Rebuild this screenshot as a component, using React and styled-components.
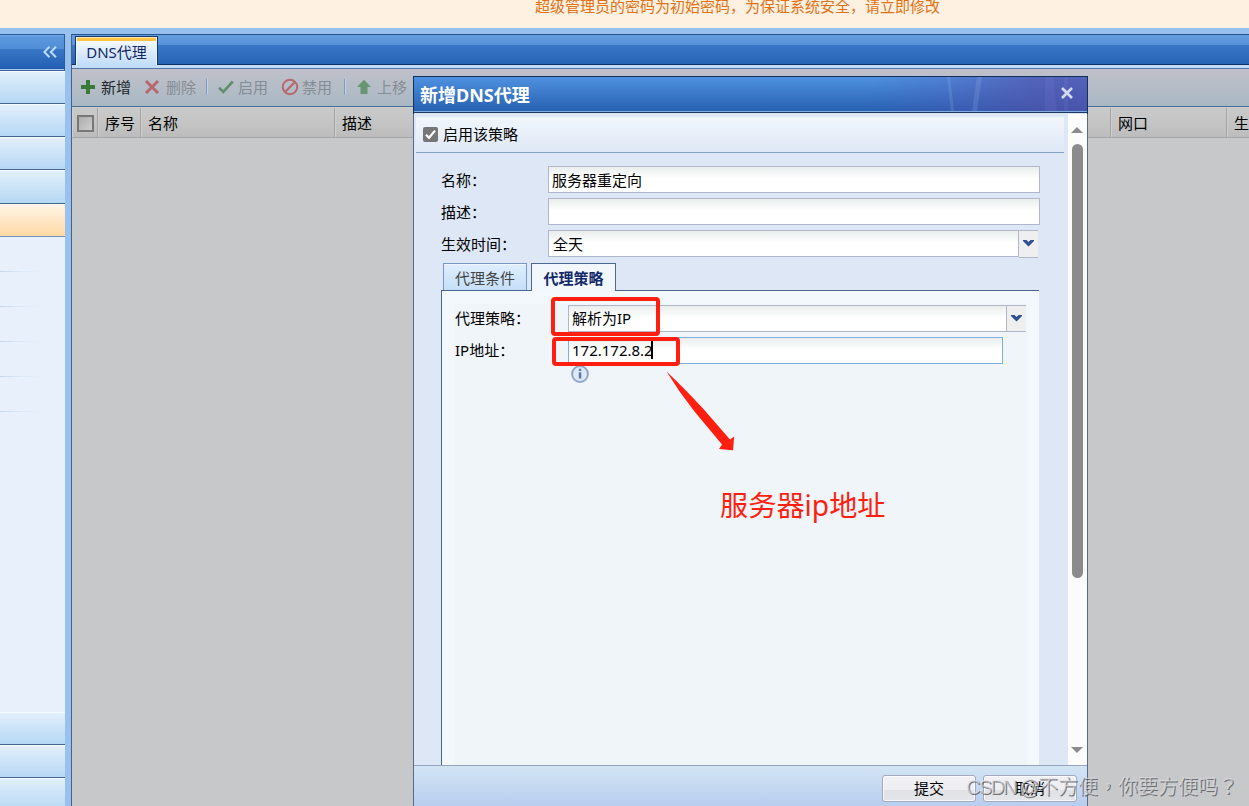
import React, { useState } from 'react';
import styled, { createGlobalStyle, css } from 'styled-components';

const GlobalStyle = createGlobalStyle`
  * {
    box-sizing: border-box;
  }

  body {
    margin: 0;
    overflow: hidden;
    background: #98c1ee;
    color: #000;
    font-family: "Noto Sans", "Noto Sans CJK SC", sans-serif;
    font-size: 15px;
    line-height: 20px;
  }

  input {
    font: inherit;
  }
`;

const PlusIcon = () => (
  <svg width="16" height="16" viewBox="0 0 16 16">
    <path d="M6 1h4v5h5v4h-5v5H6v-5H1V6h5z" fill="#3a7a38" />
  </svg>
);

const DeleteIcon = () => (
  <svg width="16" height="16" viewBox="0 0 16 16">
    <path d="M2 2l12 12M14 2L2 14" stroke="#b5686d" strokeWidth="3" fill="none" />
  </svg>
);

const CheckIcon = () => (
  <svg width="16" height="16" viewBox="0 0 16 16">
    <path d="M1 8.8l4.3 4L14.8 2.5" stroke="#628f6c" strokeWidth="2.6" fill="none" />
  </svg>
);

const BanIcon = () => (
  <svg width="18" height="18" viewBox="0 0 18 18">
    <circle cx="9" cy="9" r="7.2" stroke="#b7676d" strokeWidth="2" fill="none" />
    <path d="M4.5 13.5l9-9" stroke="#b7676d" strokeWidth="2.2" />
  </svg>
);

const UpIcon = () => (
  <svg width="16" height="16" viewBox="0 0 16 16">
    <path d="M8 .8L15 8h-3.5v7h-7V8H1z" fill="#679672" />
  </svg>
);

const ArrowDown = () => (
  <svg width="12" height="8" viewBox="0 0 12 8">
    <path d="M0 1h3.5l2 2 2-2H11v1L5.500 7.500 0 2z" fill="#2f5191" />
  </svg>
);

const CollapseIcon = () => (
  <svg width="14" height="12" viewBox="0 0 14 12">
    <path d="M6.500.8L1.300 6l5.200 5.200M13 .8L7.800 6 13 11.200" stroke="#b9dcfa" strokeWidth="2" fill="none" />
  </svg>
);

const InfoIcon = () => (
  <svg width="18" height="18" viewBox="0 0 18 18">
    <circle cx="9" cy="9" r="7.900" fill="#dfe9f6" stroke="#8ea8cc" strokeWidth="2" />
    <path d="M7.800 3.800h2.500v2.200H7.800zM7.800 7.300h2.500v6.300H7.800z" fill="#5b79a6" />
  </svg>
);

const App = () => {
  const [enabled, setEnabled] = useState(true);
  const [name, setName] = useState('服务器重定向');
  const [desc, setDesc] = useState('');

  return (
    <Page>
      <GlobalStyle />
      <Notice>超级管理员的密码为初始密码，为保证系统安全，请立即修改</Notice>

      <Workspace>
        {/* 左侧菜单 */}
        <Sidebar>
          <SidebarHeader>
            <CollapseIcon />
          </SidebarHeader>
          <MenuItem />
          <MenuItem />
          <MenuItem />
          <MenuItem $tall />
          <MenuItem $active />
          <SubMenu>
            {[1, 2, 3, 4, 5].map((n) => (
              <SubMenuItem key={n} />
            ))}
          </SubMenu>
          <MenuItem />
          <MenuItem />
          <MenuItem />
        </Sidebar>

        <Main>
          <TabBar>
            <PageTab>DNS代理</PageTab>
          </TabBar>
          <Toolbar>
            <Tool $width={64} $gap={5}><PlusIcon />新增</Tool>
            <Tool $width={61} $disabled $gap={6}><DeleteIcon />删除</Tool>
            <Separator />
            <Tool $width={63} $disabled><CheckIcon />启用</Tool>
            <Tool $width={62} $disabled $gap={3}><BanIcon />禁用</Tool>
            <Separator />
            <Tool $width={60} $disabled $gap={5}><UpIcon />上移</Tool>
          </Toolbar>
          <TableHead>
            <HeadCell $width={26}><GridCheck /></HeadCell>
            <HeadCell $width={43}>序号</HeadCell>
            <HeadCell $width={194}>名称</HeadCell>
            <HeadCell $width={776}>描述</HeadCell>
            <HeadCell $width={116}>网口</HeadCell>
            <HeadCell $width={90}>生效时间</HeadCell>
          </TableHead>
        </Main>
      </Workspace>

      {/* 新增弹窗 */}
      <Dialog>
        <DialogHeader>
          <span>新增DNS代理</span>
          <Glare viewBox="0 0 232 34" preserveAspectRatio="none">
            <path d="M92 0h3l4 34h-3zM122 0h5l-5 34h-5z" fill="#b5c8ff" opacity=".16" />
            <path d="M190 0h8l4 34h-12zM209 0h4v34h-4z" fill="#b5a8f5" opacity=".08" />
          </Glare>
          <CloseButton width="14" height="14" viewBox="0 0 14 14">
            <path d="M2 2l10 10M12 2L2 12" stroke="#d5daf5" strokeWidth="2.600" />
          </CloseButton>
        </DialogHeader>
        <DialogBody>
          <DialogContent>
            <EnableRow>
              <EnableBox onClick={() => setEnabled(!enabled)}>
                {enabled && (
                  <svg width="15" height="15" viewBox="0 0 15 15">
                    <path d="M3 7.800l3 3 6-7.200" stroke="#fff" strokeWidth="2.200" fill="none" />
                  </svg>
                )}
              </EnableBox>
              <span>启用该策略</span>
            </EnableRow>
            <Form>
              <Field>
                <Label>名称：</Label>
                <Input value={name} onChange={(e) => setName(e.target.value)} />
              </Field>
              <Field>
                <Label>描述：</Label>
                <Input value={desc} onChange={(e) => setDesc(e.target.value)} />
              </Field>
              <Field>
                <Label>生效时间：</Label>
                <Select>
                  <SelectValue>全天</SelectValue>
                  <Trigger $lower><ArrowDown /></Trigger>
                </Select>
              </Field>
            </Form>
            <InnerTabs>
              <InnerTab>代理条件</InnerTab>
              <InnerTab $active>代理策略</InnerTab>
            </InnerTabs>
            <TabPanel>
              <PanelContent>
                <Field>
                  <Label $inner>代理策略：</Label>
                  <Select $inner>
                    <SelectValue $inner>解析为IP</SelectValue>
                    <Trigger><ArrowDown /></Trigger>
                  </Select>
                </Field>
                <Field>
                  <Label $inner>IP地址：</Label>
                  <AddressBox>172.172.8.2<Caret /></AddressBox>
                </Field>
                <Hint><InfoIcon /></Hint>
              </PanelContent>
            </TabPanel>
          </DialogContent>
          <Scrollbar>
            <svg width="12" height="6" viewBox="0 0 12 6"><path d="M6 0l6 6H0z" fill="#8b8b8b" /></svg>
            <Thumb />
            <svg width="12" height="6" viewBox="0 0 12 6"><path d="M0 0h12L6 6z" fill="#8b8b8b" /></svg>
          </Scrollbar>
        </DialogBody>
        <DialogFooter>
          <FooterButton>提交</FooterButton>
          <FooterButton>取消</FooterButton>
        </DialogFooter>
      </Dialog>

      {/* 标注 */}
      <Mark $left={551} $top={297} $width={109} $height={39} />
      <Mark $left={552} $top={337} $width={128} $height={29} />
      <MarkArrow width="70" height="81" viewBox="0 0 70 81">
        <path d="M1.500 1.500Q18 17 38 38.500L65 69.500L69.200 66.500L68 80.300L54 79L57 74.500L29.500 41.500Q14 22 1.500 1.500Z" fill="#ff1f10" />
      </MarkArrow>
      <MarkText>服务器ip地址</MarkText>
      <Watermark><span>CSDN @</span>不方便，你要方便吗？</Watermark>
    </Page>
  );
};

const Page = styled.div`
  position: relative;
  display: flex;
  flex-direction: column;
  width: 1249px;
  height: 806px;
  overflow: hidden;
`;

const Notice = styled.div`
  height: 28px;
  flex-shrink: 0;
  padding-left: 535px;
  background: #fff1e1;
  color: #e07216;
  line-height: 12px;
  white-space: nowrap;
`;

const Workspace = styled.div`
  display: flex;
  flex: 1;
  gap: 6px;
  min-height: 0;
  padding-top: 6px;
`;

const Sidebar = styled.div`
  display: flex;
  flex-direction: column;
  width: 65px;
  height: 777px;
  flex-shrink: 0;
  background: #e8f0fc;
`;

const SidebarHeader = styled.div`
  display: flex;
  align-items: center;
  justify-content: flex-end;
  height: 37px;
  flex-shrink: 0;
  padding: 0 7px 2px 0;
  border-top: 1px solid #2b5b9c;
  border-right: 1px solid #2b5b9c;
  border-bottom: 1px solid #3b629a;
  background: linear-gradient(#74a9e5 0, #5b97dc 2px, #508ed6 14px, #3977c7 14px, #2460b3 33px, #1d4f99 34px, #a9cdf3 34px);
`;

const MenuItem = styled.div`
  height: ${props => (props.$tall ? '34px' : '33px')};
  flex-shrink: 0;
  border-top: 1px solid #f5fbff;
  border-bottom: 1px solid #46658d;
  background: linear-gradient(#e1effb, #b6d8f4);

  ${props => props.$active && css`
    border-top-color: #fff9ef;
    border-bottom-color: #7195bd;
    background: linear-gradient(#fff4e5, #ffd9a5);
  `}
`;

const SubMenu = styled.div`
  flex: 1;
`;

const SubMenuItem = styled.div`
  width: 42px;
  height: 35px;
  background: linear-gradient(90deg, #c5d5e9, #dce9f7 50%, #e8f0fc) bottom / 100% 1px no-repeat;
`;

const Main = styled.div`
  display: flex;
  flex: 1;
  flex-direction: column;
  min-width: 0;
  overflow: hidden;
  border-left: 1px solid #46618b;
  background: #c7c8ca;
`;

const TabBar = styled.div`
  display: flex;
  align-items: flex-end;
  height: 35px;
  flex-shrink: 0;
  padding: 0 0 3px 3px;
  border-top: 1px solid #24508e;
  border-bottom: 1px solid #5577a8;
  background: linear-gradient(#659fe0, #5591d7 10px, #3b78c8 10px, #2863b5 29px, #10305e 29px, #10305e 30px, #c1dcf8 30px);
`;

const PageTab = styled.div`
  width: 83px;
  height: 29px;
  border: 1px solid #15386c;
  border-bottom: 0;
  background: linear-gradient(#ffe7b1 0, #ffe7b1 1px, #ffc243 1px, #ffc243 4px, #f5faff 4px, #c1dcf8);
  box-shadow: inset 1px 0 #e8f4ff, inset -1px 0 #e8f4ff;
  color: #122966;
  line-height: 30px;
  text-align: center;
`;

const Toolbar = styled.div`
  display: flex;
  align-items: center;
  height: 38px;
  flex-shrink: 0;
  padding: 0 0 2px 8px;
  border-bottom: 1px solid #4d6c91;
  background: linear-gradient(#c0c1ca, #a9b8c4);
`;

const Tool = styled.div`
  display: flex;
  align-items: center;
  gap: ${props => props.$gap || 4}px;
  width: ${props => props.$width}px;
  color: ${props => (props.$disabled ? '#858d94' : '#20262b')};
  white-space: nowrap;
`;

const Separator = styled.div`
  width: 2px;
  height: 16px;
  margin: 0 10px 0 1px;
  border-left: 1px solid #769ccd;
  border-right: 1px solid #c8d0dc;
`;

const TableHead = styled.div`
  display: flex;
  height: 31px;
  flex-shrink: 0;
  border-top: 1px solid #cecece;
  border-bottom: 1px solid #a7a7a7;
  background: linear-gradient(#c9c9c9, #c5c5c5 50%, #bcbcbc);
`;

const HeadCell = styled.div`
  display: flex;
  align-items: center;
  width: ${props => props.$width}px;
  flex-shrink: 0;
  padding-left: 7px;
  border-right: 1px solid #a4a4a4;
  box-shadow: inset 1px 0 #cecece;
  white-space: nowrap;

  &:first-child {
    padding: 2px 0 0 5px;
  }
`;

const GridCheck = styled.div`
  width: 17px;
  height: 17px;
  flex-shrink: 0;
  border: 2px solid #777;
  background: linear-gradient(135deg, #acacac, #cfcfcf);
`;

const Dialog = styled.div`
  position: absolute;
  top: 76px;
  left: 413px;
  display: flex;
  flex-direction: column;
  width: 675px;
  height: 730px;
  border-left: 1px solid #586b89;
  border-right: 1px solid #586b89;
  background: #dee7f6;
`;

const DialogHeader = styled.div`
  position: relative;
  display: flex;
  align-items: center;
  justify-content: space-between;
  height: 38px;
  flex-shrink: 0;
  margin: 0 -1px;
  padding: 0 13px 1px 6px;
  border: 1px solid #11305e;
  border-bottom: 0;
  background:
    linear-gradient(transparent 34px, #81acdf 34px, #81acdf 35px, #1b3962 35px, #1b3962 36px, #dbe3ec 36px),
    linear-gradient(90deg, transparent 68%, rgba(84, 84, 176, .3) 80%, rgba(86, 78, 168, .66) 92%, rgba(86, 78, 168, .7)),
    linear-gradient(#4e91df, #2860b2 34px);
  color: #fff;
  font-size: 18px;
  font-weight: 700;
`;

const Glare = styled.svg`
  position: absolute;
  top: 0;
  right: 0;
  width: 232px;
  height: 34px;
`;

const CloseButton = styled.svg`
  position: relative;
  margin-bottom: 5px;
`;

const DialogBody = styled.div`
  display: flex;
  height: 651px;
  flex-shrink: 0;
`;

const DialogContent = styled.div`
  display: flex;
  flex: 1;
  flex-direction: column;
  padding-top: 3px;
`;

const EnableRow = styled.div`
  display: flex;
  align-items: center;
  gap: 5px;
  height: 36px;
  flex-shrink: 0;
  margin: 0 4px 0 2px;
  padding-left: 7px;
  border-bottom: 1px solid #84a3c9;
  background: linear-gradient(#f1f6fb, #dfe8f7);

  span {
    padding-bottom: 2px;
  }
`;

const EnableBox = styled.div`
  width: 15px;
  height: 15px;
  border-radius: 2px;
  background: #767676;

  svg {
    display: block;
  }
`;

const Form = styled.div`
  display: flex;
  flex-direction: column;
  padding: 13px 28px 0 27px;
`;

const Field = styled.div`
  display: flex;
  height: 32px;
  flex-shrink: 0;
`;

const Label = styled.div`
  width: ${props => (props.$inner ? '114px' : '107px')};
  flex-shrink: 0;
  padding-top: ${props => (props.$inner ? '3px' : '4px')};
  padding-left: ${props => (props.$inner ? '1px' : 0)};
`;

const fieldBox = css`
  height: 27px;
  padding: 0 4px;
  border: 1px solid #b0b6cb;
  background: linear-gradient(#e9eeed, #fff 12px);
`;

const Input = styled.input`
  ${fieldBox}
  width: 492px;
  border-radius: 0;
  outline: none;
  color: #000;
  padding: 0 3px 1px;
`;

const Select = styled.div`
  display: flex;
  width: ${props => (props.$inner ? '458px' : '490px')};
`;

const SelectValue = styled.div`
  ${fieldBox}
  flex: 1;
  padding-left: ${props => (props.$inner ? '3px' : '4px')};
  line-height: ${props => (props.$inner ? '24px' : '26px')};
`;

const Trigger = styled.div`
  display: flex;
  justify-content: center;
  width: 19px;
  height: ${props => (props.$lower ? '28px' : '27px')};
  padding-top: 8px;
  border-top: 1px solid #b0b6cb;
  border-bottom: 1px solid #b0b6cb;
  background: #efefef;
`;

const InnerTabs = styled.div`
  display: flex;
  align-items: flex-start;
  gap: 4px;
  height: 27px;
  flex-shrink: 0;
  margin-top: 1px;
  padding-left: 29px;
`;

const InnerTab = styled.div`
  position: relative;
  z-index: 1;
  width: ${props => (props.$active ? '85px' : '84px')};
  height: ${props => (props.$active ? '28px' : '27px')};
  border: 1px solid ${props => (props.$active ? '#4b6a96' : '#7898c3')};
  border-bottom: 0;
  background: ${props => (props.$active ? '#f2f7fb' : 'linear-gradient(#dfeeff, #c5dff8)')};
  box-shadow: inset 0 1px #f0f6ff;
  color: ${props => (props.$active ? '#12296a' : '#444')};
  font-weight: ${props => (props.$active ? 700 : 400)};
  line-height: 28px;
  text-align: center;
`;

const TabPanel = styled.div`
  flex: 1;
  width: 598px;
  margin-left: 27px;
  padding: 13px 12px 0 12px;
  border-top: 1px solid #4b6593;
  border-left: 1px solid #4b6593;
  background: #f3f8fc;
`;

const PanelContent = styled.div`
  height: 100%;
  padding-top: 1px;
  background: #f0f5fa;
`;

const AddressBox = styled.div`
  ${fieldBox}
  display: flex;
  align-items: center;
  width: 435px;
  padding: 0 3px 2px;
  border-color: #7eb0df;
`;

const Caret = styled.span`
  width: 2px;
  height: 18px;
  margin-left: -2px;
  background: #000;
`;

const Hint = styled.div`
  margin: -4px 0 0 117px;
`;

const Scrollbar = styled.div`
  display: flex;
  flex-direction: column;
  align-items: center;
  width: 19px;
  flex-shrink: 0;
  padding: 13px 1px 12px 0;
  background: #fcfcfc;
`;

const Thumb = styled.div`
  width: 11px;
  height: 434px;
  margin: 11px 0 auto 1px;
  border-radius: 6px;
  background: #8b8b8b;
`;

const DialogFooter = styled.div`
  display: flex;
  flex: 1;
  align-items: flex-start;
  justify-content: flex-end;
  gap: 7px;
  padding: 9px 10px 0;
  border-top: 1px solid #92a5bf;
  background: linear-gradient(#d3e4f4, #b8ceef);
`;

const FooterButton = styled.div`
  width: 94px;
  height: 27px;
  border: 1px solid #a5a9bd;
  border-radius: 3px;
  background: linear-gradient(#f0f0f5 0, #eeeef3 14px, #e1e2e6 14px, #e5e6e9);
  box-shadow: inset 0 0 0 1px #fafafc;
  line-height: 24px;
  text-align: center;
`;

const Mark = styled.div`
  position: absolute;
  top: ${props => props.$top}px;
  left: ${props => props.$left}px;
  width: ${props => props.$width}px;
  height: ${props => props.$height}px;
  border: 4px solid #ff1f10;
  border-radius: 4px;
`;

const MarkArrow = styled.svg`
  position: absolute;
  top: 370px;
  left: 665px;
`;

const MarkText = styled.div`
  position: absolute;
  top: 485px;
  left: 720px;
  color: #ff1f10;
  font-size: 28.2px;
  line-height: 40px;
  white-space: nowrap;
`;

const Watermark = styled.div`
  position: absolute;
  top: 773px;
  left: 966px;
  color: rgba(225, 225, 228, .65);
  font-family: "Liberation Sans", "Noto Sans CJK TC", sans-serif;
  font-size: 20px;
  line-height: 28px;
  text-shadow: 1px 1px 0 rgba(80, 80, 85, .75);
  white-space: nowrap;

  span {
    display: inline-block;
    width: 72px;
    letter-spacing: -1.8px;
  }
`;

export default App;
